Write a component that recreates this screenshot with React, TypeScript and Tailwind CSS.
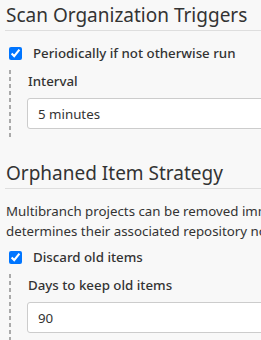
import React from "react";

const dashed =
  "bg-[repeating-linear-gradient(to_bottom,#aaaaaa_0px,#aaaaaa_4px,transparent_4px,transparent_7px)]";

function Heading({ children }: { children: React.ReactNode }) {
  return (
    <h2 className="pt-[2px] pb-[2px] text-[19px] leading-[26px] font-normal text-[#333] border-b border-[#dedede] whitespace-nowrap">
      <span className="pl-[1px]">{children}</span>
    </h2>
  );
}

function CheckRow({ label }: { label: string }) {
  return (
    <div className="flex items-center h-[20px]">
      <input
        type="checkbox"
        checked
        readOnly
        className="w-[13px] h-[13px] m-0 ml-[4px] shrink-0"
      />
      <span className="ml-[11px] text-[13.3px] leading-[20px] font-medium text-[#333] whitespace-nowrap">
        {label}
      </span>
    </div>
  );
}

function Nested({ label, value }: { label: string; value: string }) {
  return (
    <div className="flex ml-[4px]">
      <div className={`w-[2px] shrink-0 ${dashed}`} />
      <div className="pl-[16px] flex-1 pb-[9px]">
        <div className="pt-[1px] text-[13.3px] leading-[20px] font-medium text-[#333] pl-[1px] whitespace-nowrap">
          {label}
        </div>
        <div className="mt-[7px] h-[31px] w-[600px] bg-white border border-[#cccccc] rounded-[3px] pl-[10px] pt-[5px] text-[13.3px] leading-[20px] text-[#333]">
          {value}
        </div>
      </div>
    </div>
  );
}

export default function App() {
  return (
    <div className="w-[261px] h-[340px] overflow-hidden bg-[#f8f8f8] font-['Noto_Sans',sans-serif] text-[#333]">
      <div className="w-[700px] pl-[5px]">
        <Heading>Scan Organization Triggers</Heading>
        <div className="mt-[12px]">
          <CheckRow label="Periodically if not otherwise run" />
        </div>
        <div className="mt-[7px]">
          <Nested label="Interval" value="5 minutes" />
        </div>
        <div className="mt-[20px]">
          <Heading>Orphaned Item Strategy</Heading>
        </div>
        <div className="mt-[12px] text-[13.3px] leading-[20px] pl-[1px] text-[#333]">
          <div className="whitespace-nowrap">
            Multibranch projects can be removed immediately or after a set number of days once the organization folder
          </div>
          <div className="whitespace-nowrap">
            determines their associated repository no longer exists.
          </div>
        </div>
        <div className="mt-[6px]">
          <CheckRow label="Discard old items" />
        </div>
        <div className="mt-[7px]">
          <Nested label="Days to keep old items" value="90" />
        </div>
      </div>
    </div>
  );
}
